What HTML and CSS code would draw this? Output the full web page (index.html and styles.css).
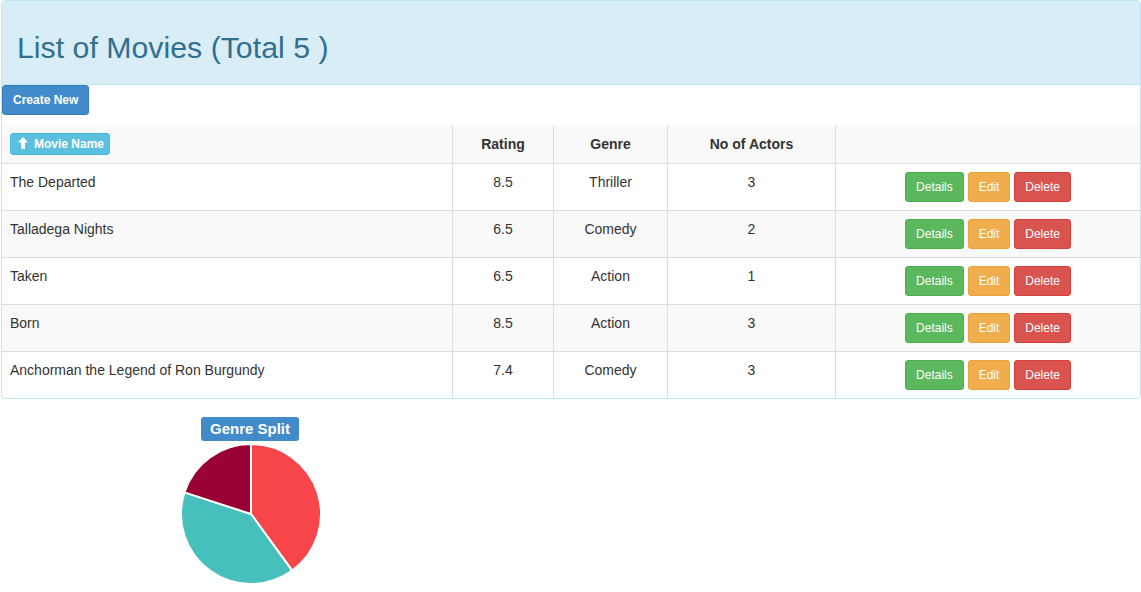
FILE: index.html
```html
<!DOCTYPE html>
<html>
<head>
<meta charset="utf-8">
<title>List of Movies</title>
<link rel="stylesheet" href="styles.css">
</head>
<body>
<div class="panel">
  <div class="panel-heading">
    <h2 class="panel-title">List of Movies (Total 5 )</h2>
  </div>
  <div class="toolbar">
    <a class="btn btn-primary btn-create">Create New</a>
  </div>
  <table class="movies">
    <tbody>
      <tr class="head-row">
        <th class="col-name"><a class="btn btn-info btn-xs"><svg class="arrow" width="10" height="12" viewBox="0 0 10 12"><path d="M5 0 L10 5.6 L7 5.6 L7 12 L3 12 L3 5.6 L0 5.6 Z" fill="#fff"/></svg>Movie Name</a></th>
        <th class="col-rating">Rating</th>
        <th class="col-genre">Genre</th>
        <th class="col-actors">No of Actors</th>
        <th class="col-actions"></th>
      </tr>
      <tr>
        <td>The Departed</td><td class="c">8.5</td><td class="c">Thriller</td><td class="c">3</td>
        <td class="c"><a class="btn btn-success">Details</a> <a class="btn btn-warning">Edit</a> <a class="btn btn-danger">Delete</a></td>
      </tr>
      <tr>
        <td>Talladega Nights</td><td class="c">6.5</td><td class="c">Comedy</td><td class="c">2</td>
        <td class="c"><a class="btn btn-success">Details</a> <a class="btn btn-warning">Edit</a> <a class="btn btn-danger">Delete</a></td>
      </tr>
      <tr>
        <td>Taken</td><td class="c">6.5</td><td class="c">Action</td><td class="c">1</td>
        <td class="c"><a class="btn btn-success">Details</a> <a class="btn btn-warning">Edit</a> <a class="btn btn-danger">Delete</a></td>
      </tr>
      <tr>
        <td>Born</td><td class="c">8.5</td><td class="c">Action</td><td class="c">3</td>
        <td class="c"><a class="btn btn-success">Details</a> <a class="btn btn-warning">Edit</a> <a class="btn btn-danger">Delete</a></td>
      </tr>
      <tr>
        <td>Anchorman the Legend of Ron Burgundy</td><td class="c">7.4</td><td class="c">Comedy</td><td class="c">3</td>
        <td class="c"><a class="btn btn-success">Details</a> <a class="btn btn-warning">Edit</a> <a class="btn btn-danger">Delete</a></td>
      </tr>
    </tbody>
  </table>
</div>

<div class="chart">
  <span class="chart-label">Genre Split</span>
  <svg class="pie" width="144" height="144" viewBox="0 0 144 144">
    <path d="M72 72 L72 2 A70 70 0 0 1 113.15 128.63 Z" fill="#F7464A" stroke="#fff" stroke-width="2" stroke-linejoin="round"/>
    <path d="M72 72 L113.15 128.63 A70 70 0 0 1 5.43 50.37 Z" fill="#46BFBD" stroke="#fff" stroke-width="2" stroke-linejoin="round"/>
    <path d="M72 72 L5.43 50.37 A70 70 0 0 1 72 2 Z" fill="#990033" stroke="#fff" stroke-width="2" stroke-linejoin="round"/>
  </svg>
</div>
</body>
</html>
```

FILE: styles.css
```css
* { box-sizing: border-box; }

body {
  margin: 0;
  font-family: "Liberation Sans", Arial, Helvetica, sans-serif;
  font-size: 14px;
  line-height: 20px;
  color: #333;
  background: #fff;
}

.panel {
  width: 1140px;
  margin: 0 0 18px 1px;
  border: 1px solid #bce8f1;
  border-radius: 4px;
  background: #fff;
  overflow: hidden;
}

.panel-heading {
  background: #d9edf7;
  border-bottom: 1px solid #bce8f1;
  padding: 10px 15px;
}

.panel-title {
  margin: 20px 0 10px;
  font-size: 30.3px;
  line-height: 33px;
  font-weight: normal;
  color: #31708f;
}

.toolbar {
  height: 30px;
  margin-bottom: 10px;
}

.btn {
  display: inline-block;
  vertical-align: top;
  border: 1px solid transparent;
  border-radius: 3px;
  font-size: 12px;
  line-height: 18px;
  padding: 5px 10px;
  color: #fff;
  text-decoration: none;
  white-space: nowrap;
}

.btn-create { font-weight: bold; padding: 5px 10px; }

.btn-primary { background: #428bca; border-color: #357ebd; }
.btn-success { background: #5cb85c; border-color: #4cae4c; }
.btn-warning { background: #f0ad4e; border-color: #eea236; }
.btn-danger  { background: #d9534f; border-color: #d43f3a; }
.btn-info    { background: #5bc0de; border-color: #46b8da; }

.btn-xs {
  padding: 1px 5px;
  font-weight: bold;
}

.arrow {
  vertical-align: -1px;
  margin: 0 6px 0 2px;
}

.movies {
  width: 100%;
  table-layout: fixed;
  border-collapse: separate;
  border-spacing: 0;
}

.movies th,
.movies td {
  padding: 8px;
  line-height: 20px;
  vertical-align: top;
  border-top: 1px solid #ddd;
  border-left: 1px solid #ddd;
}

.movies th {
  font-weight: bold;
  text-align: center;
  vertical-align: middle;
}

.movies tr:first-child th { border-top: 0; }
.movies th:first-child,
.movies td:first-child { border-left: 0; text-align: left; }

.movies tr:nth-child(odd) { background: #f9f9f9; }

.col-name { width: 450px; }
.col-rating { width: 101px; }
.col-genre { width: 114px; }
.col-actors { width: 168px; }

.movies td.c { text-align: center; }

.chart {
  width: 500px;
  text-align: center;
}

.chart-label {
  display: inline-block;
  background: #428bca;
  color: #fff;
  font-weight: bold;
  font-size: 15px;
  line-height: 18px;
  padding: 3px 9px;
  border-radius: 3px;
}

.pie {
  display: block;
  margin: 1px 0 0 179px;
}
```
